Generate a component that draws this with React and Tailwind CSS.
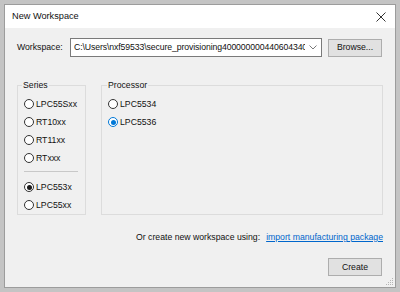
import React from "react";

const Radio = ({ label, checked, accent }) => {
  const ring = checked && accent ? "border-[#0078d7]" : "border-[#333333]";
  return (
    <div className="flex items-center h-[18px]">
      <span
        className={`w-[10px] h-[10px] rounded-full border bg-white flex items-center justify-center ${ring}`}
      >
        {checked && (
          <span
            className={`w-[5px] h-[5px] rounded-full ${
              accent ? "bg-[#0078d7]" : "bg-[#1a1a1a]"
            }`}
          />
        )}
      </span>
      <span className="ml-[2px]">{label}</span>
    </div>
  );
};

const Chevron = () => (
  <svg width="8" height="5" viewBox="0 0 8 5" fill="none">
    <path d="M0.5 0.5 L4 4 L7.5 0.5" stroke="#7a7a7a" strokeWidth="1" />
  </svg>
);

export default function App() {
  return (
    <div
      className="w-[400px] h-[292px] bg-[#c4c4c4] pt-[4px] pl-[4px] text-[8.7px] text-[#111]"
      style={{ fontFamily: '"Liberation Sans", Arial, sans-serif' }}
    >
      <div className="w-[392px] h-[284px] border border-[#9c9c9c] bg-[#f0f0f0] flex flex-col">
        {/* title bar */}
        <div className="h-[23px] bg-white flex items-center justify-between pl-[7px] pr-[9px]">
          <span className="text-[9.2px]">New Workspace</span>
          <svg width="10" height="10" viewBox="0 0 10 10">
            <path d="M0.5 0.5 L9.5 9.5 M9.5 0.5 L0.5 9.5" stroke="#333" strokeWidth="1" />
          </svg>
        </div>

        <div className="flex-1 flex flex-col pl-[12px] pr-[12px] relative">
          {/* workspace row */}
          <div className="flex items-center mt-[10px] h-[19px]">
            <span className="w-[53px]">Workspace:</span>
            <div className="w-[252px] h-[19px] border border-[#7a7a7a] bg-white flex items-center pl-[3px] pr-[4px]">
              <span className="flex-1 overflow-hidden whitespace-nowrap tracking-[-0.1px]">
                C:\Users\nxf59533\secure_provisioning400000000440604340
              </span>
              <span className="ml-[4px] flex items-center">
                <Chevron />
              </span>
            </div>
            <button className="ml-[6px] w-[54px] h-[18px] border border-[#adadad] bg-[#e1e1e1] flex items-center justify-center">
              Browse...
            </button>
          </div>

          {/* group boxes */}
          <div className="flex mt-[22px]">
            <fieldset className="w-[69px] h-[136px] border border-[#dcdcdc] pl-[6px] pt-[3px] m-0">
              <legend className="ml-[-2px] px-[1px]">Series</legend>
              <Radio label="LPC55Sxx" />
              <Radio label="RT10xx" />
              <Radio label="RT11xx" />
              <Radio label="RTxxx" />
              <div className="h-px bg-[#c8c8c8] w-[54px] mt-[4px] mb-[6px]" />
              <Radio label="LPC553x" checked />
              <Radio label="LPC55xx" />
            </fieldset>
            <fieldset className="ml-[15px] w-[282px] h-[136px] border border-[#dcdcdc] pl-[6px] pt-[3px] m-0">
              <legend className="ml-[-1px] px-[1px]">Processor</legend>
              <Radio label="LPC5534" />
              <Radio label="LPC5536" checked accent />
            </fieldset>
          </div>

          {/* import link */}
          <div className="flex justify-end items-center mt-[16px]">
            <span>Or create new workspace using:</span>
            <a className="ml-[6px] text-[#0066cc] underline">import manufacturing package</a>
          </div>

          {/* create */}
          <div className="flex justify-end mt-[14px]">
            <button className="w-[54px] h-[18px] border border-[#adadad] bg-[#e1e1e1] flex items-center justify-center mr-[1px]">
              Create
            </button>
          </div>

          {/* resize grip */}
          <svg className="absolute right-[1px] bottom-[1px]" width="8" height="8" viewBox="0 0 8 8">
            <rect x="6" y="0" width="1" height="1" fill="#b5b5b5" />
            <rect x="4" y="2" width="1" height="1" fill="#b5b5b5" />
            <rect x="6" y="2" width="1" height="1" fill="#b5b5b5" />
            <rect x="2" y="4" width="1" height="1" fill="#b5b5b5" />
            <rect x="4" y="4" width="1" height="1" fill="#b5b5b5" />
            <rect x="6" y="4" width="1" height="1" fill="#b5b5b5" />
            <rect x="0" y="6" width="1" height="1" fill="#b5b5b5" />
            <rect x="2" y="6" width="1" height="1" fill="#b5b5b5" />
            <rect x="4" y="6" width="1" height="1" fill="#b5b5b5" />
            <rect x="6" y="6" width="1" height="1" fill="#b5b5b5" />
          </svg>
        </div>
      </div>
    </div>
  );
}
